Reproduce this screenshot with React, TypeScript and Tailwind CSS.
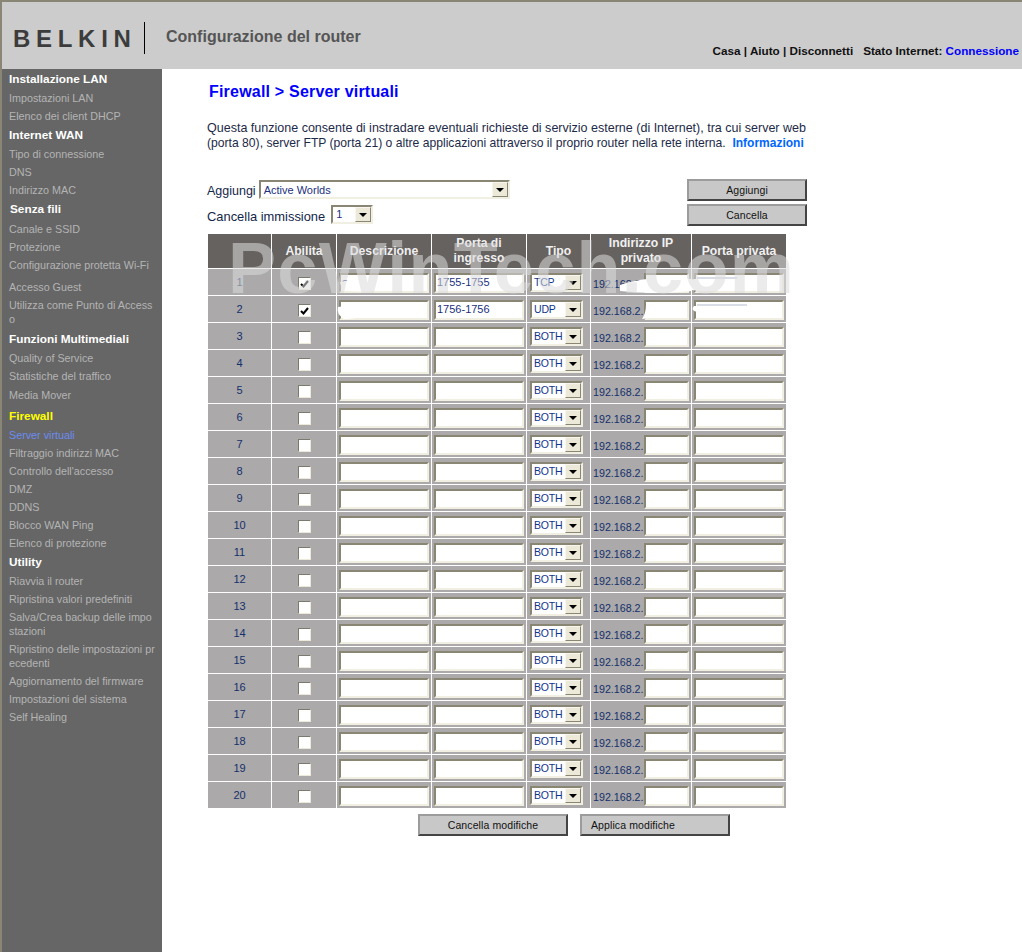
import React from "react";

const sub = "text-[10.75px] leading-[14px] text-[#b4b4b4] whitespace-nowrap";
const head = "text-[11.8px] leading-[14px] font-bold text-white whitespace-nowrap";

const nav: [string, string, string][] = [
  ["Installazione LAN", head, "mt-[3px]"],
  ["Impostazioni LAN", sub, "mt-[5px]"],
  ["Elenco dei client DHCP", sub, "mt-[4px]"],
  ["Internet WAN", head, "mt-[5px]"],
  ["Tipo di connessione", sub, "mt-[5px]"],
  ["DNS", sub, "mt-[4px]"],
  ["Indirizzo MAC", sub, "mt-[4px]"],
  ["Senza fili", head, "mt-[5px] ml-[1px]"],
  ["Canale e SSID", sub, "mt-[6px]"],
  ["Protezione", sub, "mt-[4px]"],
  ["Configurazione protetta Wi-Fi", sub, "mt-[4px]"],
  ["Accesso Guest", sub, "mt-[8px]"],
  ["Utilizza come Punto di Access|o", sub, "mt-[4px]"],
  ["Funzioni Multimediali", head, "mt-[6px]"],
  ["Quality of Service", sub, "mt-[5px]"],
  ["Statistiche del traffico", sub, "mt-[4px]"],
  ["Media Mover", sub, "mt-[5px]"],
  ["Firewall", "text-[11.8px] leading-[14px] font-bold text-[#ffff00] whitespace-nowrap", "mt-[7px]"],
  ["Server virtuali", "text-[10.75px] leading-[14px] text-[#6c8cf0] whitespace-nowrap", "mt-[5px]"],
  ["Filtraggio indirizzi MAC", sub, "mt-[4px]"],
  ["Controllo dell'accesso", sub, "mt-[4px]"],
  ["DMZ", sub, "mt-[4px]"],
  ["DDNS", sub, "mt-[4px]"],
  ["Blocco WAN Ping", sub, "mt-[4px]"],
  ["Elenco di protezione", sub, "mt-[4px]"],
  ["Utility", head, "mt-[5px]"],
  ["Riavvia il router", sub, "mt-[5px]"],
  ["Ripristina valori predefiniti", sub, "mt-[4px]"],
  ["Salva/Crea backup delle impo|stazioni", sub, "mt-[4px]"],
  ["Ripristino delle impostazioni pr|ecedenti", sub, "mt-[4px]"],
  ["Aggiornamento del firmware", sub, "mt-[4px]"],
  ["Impostazioni del sistema", sub, "mt-[4px]"],
  ["Self Healing", sub, "mt-[4px]"],
];

const inset =
  "border-2 border-t-[#8a8674] border-l-[#8a8674] border-r-[#f1efe2] border-b-[#f1efe2] bg-white";

function Arrow() {
  return (
    <span className="flex h-[15px] w-[16px] shrink-0 items-center justify-center bg-[#ece9d8] border border-t-[#f8f6ee] border-l-[#f8f6ee] border-r-[#8a8674] border-b-[#8a8674]">
      <svg width="8" height="4" viewBox="0 0 8 4">
        <path d="M0 0h8L4 4z" fill="#000" />
      </svg>
    </span>
  );
}

function Field({ w, value }: { w: string; value?: string }) {
  return (
    <div className={`${w} ${inset} h-[20px] overflow-hidden pl-[1px] text-[11px] leading-[15px] text-[#1c2f80]`}>
      {value}
    </div>
  );
}

function Drop({ value }: { value: string }) {
  return (
    <div className={`${inset} flex h-[19px] w-[53px] items-start justify-between overflow-hidden text-[10.5px] leading-[15px] tracking-[-0.2px] text-[#10358c]`}>
      <span className="pl-[2px]">{value}</span>
      <Arrow />
    </div>
  );
}

function Check({ on }: { on?: boolean }) {
  return (
    <div className="flex h-[13px] w-[13px] items-center justify-center border border-t-[#7c7a6c] border-l-[#7c7a6c] border-r-[#ece9d8] border-b-[#ece9d8] bg-white">
      {on && (
        <svg width="9" height="8" viewBox="0 0 9 8">
          <path d="M1 4l2.5 2.5L8 1" fill="none" stroke="#000" strokeWidth="2" />
        </svg>
      )}
    </div>
  );
}

const th = "flex items-center justify-center bg-[#666260] text-center text-[12.2px] leading-[15px] font-bold text-[#f0f0f0]";
const td = "flex h-[26px] items-start justify-center bg-[#aba9a9] pt-[4px]";

const rows = Array.from({ length: 20 }, (_, i) => i + 1);

function Btn({ children, className }: { children: React.ReactNode; className: string }) {
  return (
    <div className={`${className} flex items-center border-2 border-t-[#9c9c9c] border-l-[#9c9c9c] border-r-[#444444] border-b-[#444444] bg-[#c8c8c8] pt-px text-[10.5px] tracking-[0.1px] text-[#111]`}>
      {children}
    </div>
  );
}

export default function App() {
  return (
    <div className="relative h-[952px] w-full overflow-hidden border-t-2 border-l-2 border-[#8a8676] bg-white [font-family:Liberation_Sans,Arial,sans-serif]">
      <header className="relative flex h-[67px] bg-[#cccccc] pt-[17px] pl-[11px]">
        <div className="mt-[5px] flex h-[30px] w-[120px] items-center text-[24px] font-bold tracking-[5.7px] text-[#3c3c3c] whitespace-nowrap">
          BELKIN
        </div>
        <div className="mt-[3px] ml-[11px] h-[32px] w-px bg-black" />
        <div className="mt-[8px] ml-[21px] text-[16px] leading-[20px] font-bold text-[#555555] whitespace-nowrap">
          Configurazione del router
        </div>
        <div className="absolute top-[41px] right-[3px] flex gap-[10px] text-[11.7px] leading-[15px] font-bold text-[#111] whitespace-nowrap">
          <span>Casa | Aiuto | Disconnetti</span>
          <span>
            Stato Internet: <span className="text-[#0000ff]">Connessione</span>
          </span>
        </div>
      </header>

      <div className="flex">
        <aside className="h-[883px] w-[160px] shrink-0 bg-[#666666] pl-[7px]">
          {nav.map(([label, cls, mt]) => {
            const [a, b] = label.split("|");
            return (
              <div key={label} className={`${cls} ${mt}`}>
                {a}
                {b && <br />}
                {b}
              </div>
            );
          })}
        </aside>

        <main className="relative flex-1 pl-[45px]">
          <h1 className="mt-[14px] ml-[2px] text-[16px] leading-[18px] font-bold tracking-[0.2px] text-[#0000ff] whitespace-nowrap">
            Firewall &gt; Server virtuali
          </h1>
          <p className="mt-[20px] text-[12.53px] leading-[15px] text-[#1d2a48] whitespace-nowrap">
            Questa funzione consente di instradare eventuali richieste di servizio esterne (di Internet), tra cui server web
            <br />
            <span className="text-[12.15px]">
              (porta 80), server FTP (porta 21) o altre applicazioni attraverso il proprio router nella rete interna.&nbsp;{" "}
            </span>
            <span className="text-[12px] font-bold text-[#0066ff]">Informazioni</span>
          </p>

          <div className="mt-[28px] flex w-[600px] items-start justify-between">
            <div className="pt-[1px]">
              <div className="flex items-center">
                <span className="mt-[4px] text-[12.5px] leading-[15px] text-[#12264a]">Aggiungi</span>
                <div className={`${inset} ml-[3px] flex h-[19px] w-[251px] items-start justify-between text-[11px] leading-[15px] text-[#1c2f80]`}>
                  <span className="pt-px pl-[3px]">Active Worlds</span>
                  <Arrow />
                </div>
              </div>
              <div className="mt-[6px] flex items-center">
                <span className="mt-[3px] text-[12.9px] leading-[15px] text-[#12264a]">Cancella immissione</span>
                <div className={`${inset} ml-[6px] flex h-[19px] w-[42px] items-start justify-between text-[11px] leading-[15px] text-[#1c2f80]`}>
                  <span className="pl-[3px]">1</span>
                  <Arrow />
                </div>
              </div>
            </div>
            <div className="flex flex-col gap-[3px]">
              <Btn className="h-[22px] w-[120px] justify-center">Aggiungi</Btn>
              <Btn className="h-[22px] w-[120px] justify-center">Cancella</Btn>
            </div>
          </div>

          <div className="mt-[8px] ml-[1px] grid w-[578px] grid-cols-[63px_64px_94px_94px_63px_100px_94px] gap-px">
            <div className={`${th} h-[34px]`} />
            <div className={th}>Abilita</div>
            <div className={th}>Descrizione</div>
            <div className={th}>
              Porta di
              <br />
              ingresso
            </div>
            <div className={th}>Tipo</div>
            <div className={th}>
              Indirizzo IP
              <br />
              privato
            </div>
            <div className={th}>Porta privata</div>
            {rows.map((n) => (
              <React.Fragment key={n}>
                <div className={`${td} text-[11px] leading-[18px] text-[#14306c]`}>{n}</div>
                <div className={`${td} pt-[8px]`}>
                  <Check on={n <= 2} />
                </div>
                <div className={td}>
                  <Field w="w-[90px]" value={n === 1 ? "s" : undefined} />
                </div>
                <div className={td}>
                  <Field w="w-[90px]" value={n === 1 ? "1755-1755" : n === 2 ? "1756-1756" : undefined} />
                </div>
                <div className={`${td} pr-[4px]`}>
                  <Drop value={n === 1 ? "TCP" : n === 2 ? "UDP" : "BOTH"} />
                </div>
                <div className={`${td} justify-start pl-[2px]`}>
                  <span className="mt-[2px] w-[51px] text-[10.7px] leading-[18px] text-[#14306c] whitespace-nowrap">192.168.2.</span>
                  <Field w="w-[45px]" />
                </div>
                <div className={td}>
                  <Field w="w-[90px]" />
                </div>
              </React.Fragment>
            ))}
          </div>

          <div className="mt-[6px] ml-[211px] flex gap-[12px]">
            <Btn className="h-[22px] w-[150px] justify-center">Cancella modifiche</Btn>
            <Btn className="h-[22px] w-[150px] pl-[9px]">Applica modifiche</Btn>
          </div>

          {/* redaction smudges */}
          <svg className="absolute top-0 left-0" width="640" height="260" viewBox="0 0 640 260">
            <path d="M178 213 Q200 208 222 213 L222 221 Q198 224 180 221z" fill="#fff" />
            <path d="M176 238 Q195 234 214 240 Q200 250 182 250 Q174 245 176 238z" fill="#fff" />
            <path d="M458 216 Q490 205 530 210 L530 222 Q490 226 458 222z" fill="#fff" />
            <path d="M526 211 Q550 206 580 210 L570 216 Q545 224 530 221 Q522 216 526 211z" fill="#fff" />
            <path d="M535 209 H575" stroke="#8090b0" strokeWidth="1" opacity="0.6" />
            <path d="M484 236 Q494 236 496 240 Q490 250 480 250 Q484 244 484 236z" fill="#fff" />
            <path d="M532 237 Q555 236 588 238 Q560 240 535 243 Q528 241 532 237z" fill="#fff" />
            <path d="M535 236 H585" stroke="#8090b0" strokeWidth="1" opacity="0.6" />
          </svg>

          {/* watermark */}
          <div className="pointer-events-none absolute top-[159px] left-[66px] text-[72px] leading-[80px] font-bold tracking-[1.3px] whitespace-nowrap text-[#dcdcdc] opacity-55">
            PcWinTech.com
          </div>
        </main>
      </div>
    </div>
  );
}
